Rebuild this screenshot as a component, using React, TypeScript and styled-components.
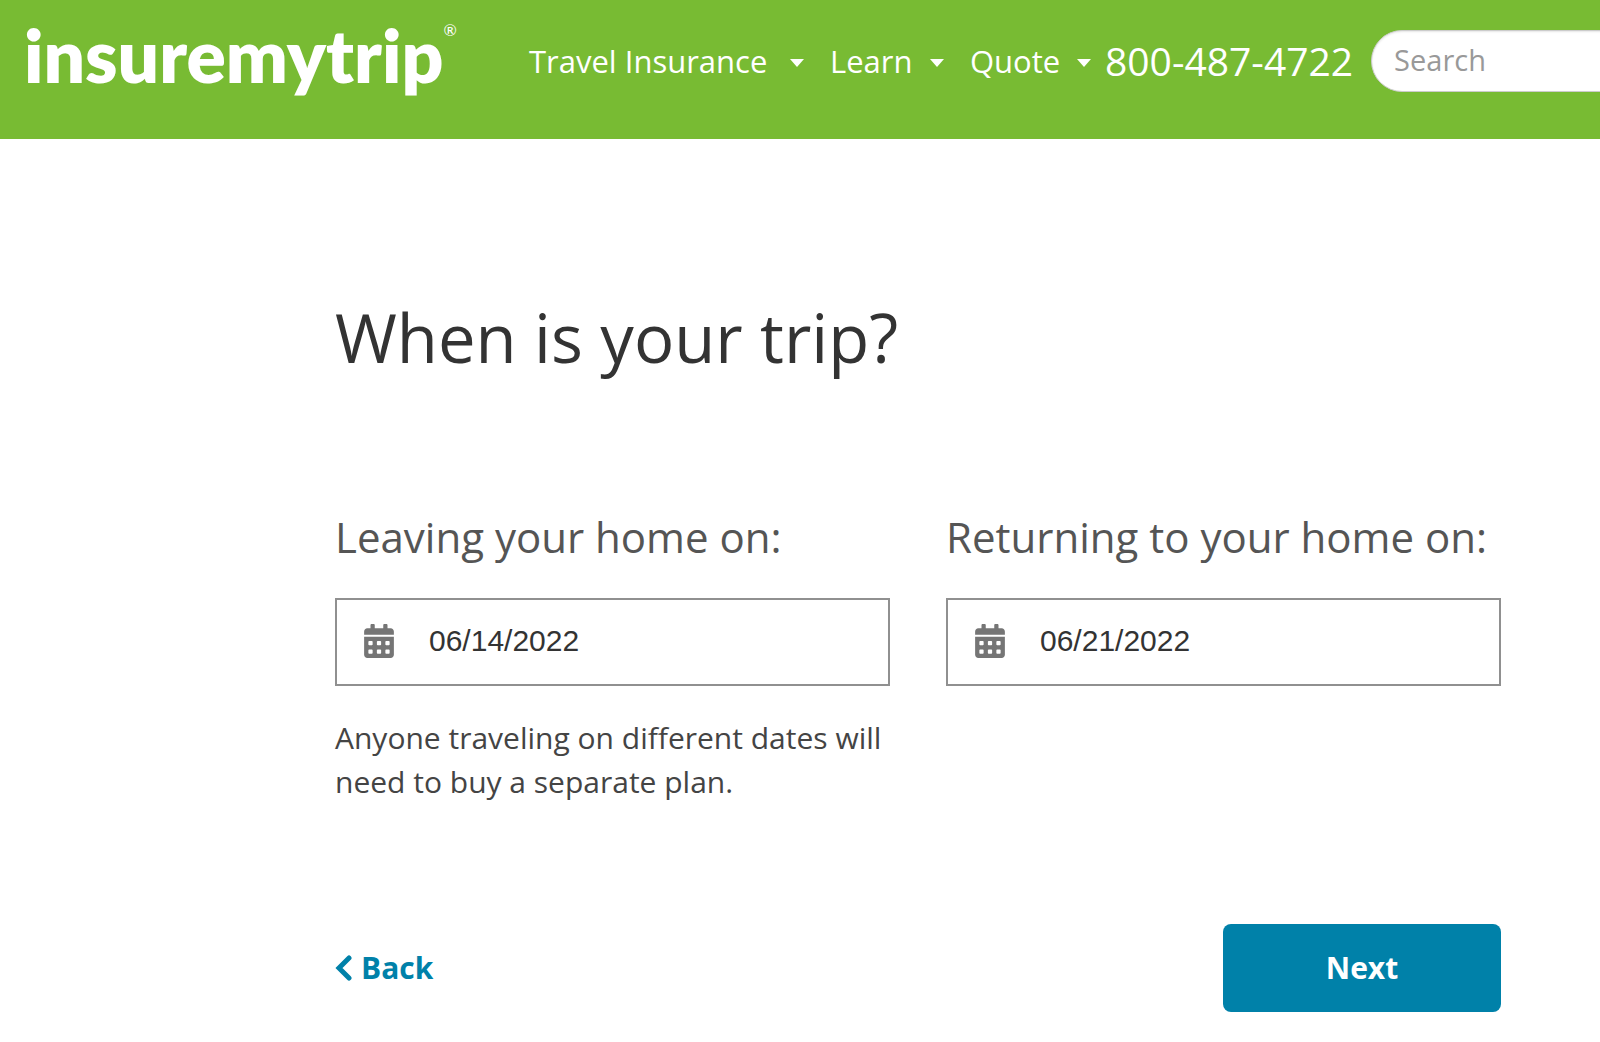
import React, { useState } from "react";
import styled, { createGlobalStyle } from "styled-components";

const GlobalStyle = createGlobalStyle`
  *, *::before, *::after { box-sizing: border-box; }
  body {
    margin: 0;
    background: #fff;
    color: #333;
    font-family: "Open Sans", "Noto Sans", sans-serif;
    overflow-x: hidden;
  }
`;

const Header = styled.header`
  display: flex;
  align-items: flex-start;
  height: 139px;
  padding-left: 24px;
  background: #78bb33;
  color: #fff;
  overflow: hidden;
`;

const Logo = styled.a`
  display: flex;
  flex: 0 0 505px;
  align-items: flex-start;
  padding-top: 12px;
  color: #fff;
  font-family: Lato, sans-serif;
  font-size: 73px;
  font-weight: 800;
  line-height: 86px;
  text-decoration: none;
`;

const Registered = styled.span`
  padding-top: 8px;
  font-size: 16px;
  font-weight: 400;
  line-height: 20px;
`;

const Nav = styled.nav`
  display: flex;
  flex: none;
  align-items: center;
  height: 122px;
`;

const MenuButton = styled.button<{ $width: number }>`
  display: flex;
  align-items: center;
  justify-content: space-between;
  width: ${(p) => p.$width}px;
  margin-right: 26px;
  padding: 0;
  border: 0;
  background: none;
  color: inherit;
  font: 400 31px/44px "Open Sans", sans-serif;
  white-space: nowrap;
  cursor: pointer;

  &:last-of-type { margin-right: 14px; }
`;

const Caret = styled.span`
  border: 7px solid transparent;
  border-top: 8px solid #fff;
  border-bottom: 0;
  margin-top: 4px;
`;

const Phone = styled.a`
  color: inherit;
  font-size: 39px;
  line-height: 56px;
  text-decoration: none;
  white-space: nowrap;
`;

const SearchForm = styled.form`
  flex: none;
  margin: 30px 0 0 18px;
`;

const SearchInput = styled.input`
  width: 420px;
  height: 62px;
  padding: 0 22px 4px;
  border: 1px solid #ccc;
  border-radius: 31px;
  background: #fff;
  color: #555;
  font: 400 29px/40px "Open Sans", sans-serif;
  box-shadow: inset 0 1px 2px rgba(0, 0, 0, 0.1);

  &::placeholder { color: #999; opacity: 1; }
`;

const Main = styled.main`
  padding: 154px 99px 30px 335px;
`;

const Title = styled.h1`
  margin: 0 0 126px;
  font-size: 67px;
  font-weight: 400;
  line-height: 88px;
`;

const Fields = styled.div`
  display: grid;
  grid-template-columns: 1fr 1fr;
  column-gap: 56px;
`;

const Label = styled.label`
  display: block;
  margin-bottom: 31px;
  color: #555;
  font-size: 42px;
  line-height: 60px;
  white-space: nowrap;
`;

const DateBox = styled.div`
  display: flex;
  align-items: center;
  height: 88px;
  padding: 0 27px 2px;
  border: 2px solid #909090;
`;

const DateInput = styled.input`
  flex: 1;
  min-width: 0;
  margin-left: 35px;
  padding: 0;
  border: 0;
  outline: 0;
  background: none;
  color: #333;
  font: 400 30px/40px "Liberation Sans", Arial, sans-serif;
`;

const Note = styled.p`
  margin: 30px 0 0;
  font-size: 30px;
  line-height: 44px;
  color: #444;
`;

const Actions = styled.div`
  display: flex;
  align-items: center;
  justify-content: space-between;
  margin-top: 120px;
`;

const BackLink = styled.a`
  display: flex;
  align-items: center;
  gap: 8px;
  color: #0081a9;
  font-size: 30px;
  font-weight: 700;
  line-height: 44px;
  text-decoration: none;
`;

const NextButton = styled.button`
  width: 278px;
  height: 88px;
  border: 0;
  border-radius: 8px;
  background: #0081a9;
  color: #fff;
  font: 700 30px/40px "Open Sans", sans-serif;
  cursor: pointer;
`;

const CalendarIcon = () => (
  <svg width="30" height="34" viewBox="0 0 448 512" fill="#757575" aria-hidden="true">
    <path d="M0 464c0 26.500 21.500 48 48 48h352c26.500 0 48-21.500 48-48V192H0v272zm320-196c0-6.600 5.400-12 12-12h40c6.600 0 12 5.400 12 12v40c0 6.600-5.400 12-12 12h-40c-6.600 0-12-5.400-12-12v-40zm0 128c0-6.600 5.400-12 12-12h40c6.600 0 12 5.400 12 12v40c0 6.600-5.400 12-12 12h-40c-6.600 0-12-5.400-12-12v-40zM192 268c0-6.600 5.400-12 12-12h40c6.600 0 12 5.400 12 12v40c0 6.600-5.400 12-12 12h-40c-6.600 0-12-5.400-12-12v-40zm0 128c0-6.600 5.400-12 12-12h40c6.600 0 12 5.400 12 12v40c0 6.600-5.400 12-12 12h-40c-6.600 0-12-5.400-12-12v-40zM64 268c0-6.600 5.400-12 12-12h40c6.600 0 12 5.400 12 12v40c0 6.600-5.400 12-12 12H76c-6.600 0-12-5.400-12-12v-40zm0 128c0-6.600 5.400-12 12-12h40c6.600 0 12 5.400 12 12v40c0 6.600-5.400 12-12 12H76c-6.600 0-12-5.400-12-12v-40zM400 64h-48V16c0-8.800-7.200-16-16-16h-32c-8.800 0-16 7.200-16 16v48H160V16c0-8.800-7.200-16-16-16h-32c-8.800 0-16 7.200-16 16v48H48C21.500 64 0 85.500 0 112v48h448v-48c0-26.500-21.500-48-48-48z" />
  </svg>
);

const BackChevron = () => (
  <svg width="18" height="26" viewBox="0 0 18 26" fill="none" aria-hidden="true">
    <path d="M14 3L4 13L14 23" stroke="#0081a9" strokeWidth="5" strokeLinecap="round" />
  </svg>
);

const menus = [
  { text: "Travel Insurance", width: 275 },
  { text: "Learn", width: 114 },
  { text: "Quote", width: 121 },
];

function DateField({ id, label, initial, note }: { id: string; label: string; initial: string; note?: string }) {
  const [value, setValue] = useState(initial);
  return (
    <div>
      <Label htmlFor={id}>{label}</Label>
      <DateBox>
        <CalendarIcon />
        <DateInput id={id} type="text" value={value} onChange={(e) => setValue(e.target.value)} />
      </DateBox>
      {note && <Note>{note}</Note>}
    </div>
  );
}

export default function App() {
  return (
    <>
      <GlobalStyle />
      <Header>
        <Logo href="#">
          insuremytrip<Registered>®</Registered>
        </Logo>
        <Nav>
          {menus.map((m) => (
            <MenuButton key={m.text} type="button" $width={m.width}>
              {m.text}
              <Caret />
            </MenuButton>
          ))}
          <Phone href="tel:8004874722">800-487-4722</Phone>
        </Nav>
        <SearchForm role="search">
          <SearchInput type="search" placeholder="Search" aria-label="Search" />
        </SearchForm>
      </Header>
      <Main>
        <Title>When is your trip?</Title>
        <Fields>
          <DateField
            id="leaving"
            label="Leaving your home on:"
            initial="06/14/2022"
            note="Anyone traveling on different dates will need to buy a separate plan."
          />
          <DateField id="returning" label="Returning to your home on:" initial="06/21/2022" />
        </Fields>
        <Actions>
          <BackLink href="#">
            <BackChevron />
            Back
          </BackLink>
          <NextButton type="button">Next</NextButton>
        </Actions>
      </Main>
    </>
  );
}
